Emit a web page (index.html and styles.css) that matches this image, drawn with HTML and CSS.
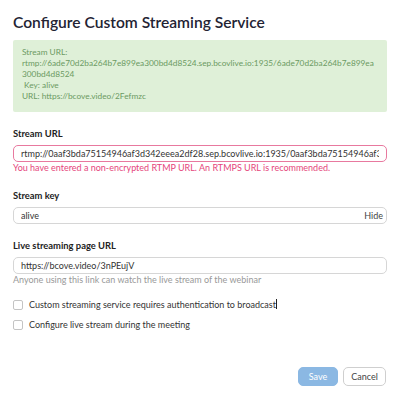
FILE: index.html
```html
<!DOCTYPE html>
<html lang="en">
<head>
    <meta charset="UTF-8">
    <meta name="viewport" content="width=device-width, initial-scale=1.0">
    <title>Configure Custom Streaming Service</title>
    <link rel="stylesheet" href="styles.css">
</head>
<body>
    <div class="dialog">
        <h1 class="title">Configure Custom Streaming Service</h1>

        <div class="notice">
            Stream URL:<br>
            rtmp://6ade70d2ba264b7e899ea300bd4d8524.sep.bcovlive.io:1935/6ade70d2ba264b7e899ea<br>
            300bd4d8524<br>
            &nbsp;Key: alive<br>
            URL: https://bcove.video/2Fefmzc
        </div>

        <div class="field">
            <label class="label">Stream URL</label>
            <input class="input input-error" type="text" value="rtmp://0aaf3bda75154946af3d342eeea2df28.sep.bcovlive.io:1935/0aaf3bda75154946af3d342eeea2df28">
            <div class="error">You have entered a non-encrypted RTMP URL. An RTMPS URL is recommended.</div>
        </div>

        <div class="field">
            <label class="label">Stream key</label>
            <div class="input input-group">
                <input class="bare" type="text" value="alive">
                <span class="hide">Hide</span>
            </div>
        </div>

        <div class="field">
            <label class="label">Live streaming page URL</label>
            <input class="input" type="text" value="https://bcove.video/3nPEujV">
            <div class="hint">Anyone using this link can watch the live stream of the webinar</div>
        </div>

        <div class="check first">
            <span class="box"></span>
            <span>Custom streaming service requires authentication to broadcast<span class="caret"></span></span>
        </div>
        <div class="check">
            <span class="box"></span>
            <span>Configure live stream during the meeting</span>
        </div>

        <div class="actions">
            <button class="btn btn-primary">Save</button>
            <button class="btn btn-cancel">Cancel</button>
        </div>
    </div>
</body>
</html>
```

FILE: styles.css
```css
* { margin: 0; padding: 0; box-sizing: border-box; }
body {
    font-family: Lato, 'Noto Sans', sans-serif;
    background: white;
    color: #232333;
}
.dialog {
    width: 400px;
    padding: 12px 13px 0 13px;
}
.title {
    font-size: 15.6px;
    line-height: 20px;
    font-weight: 600;
    color: #232333;
    margin-bottom: 8px;
}
.notice {
    background: #dff0d8;
    color: #6b9a62;
    font-size: 8.3px;
    line-height: 11px;
    padding: 7px 9px 10px 9px;
    border-radius: 2px;
    white-space: nowrap;
}
.field {
    margin-top: 16px;
}
.label {
    display: block;
    font-size: 9.4px;
    line-height: 12px;
    font-weight: bold;
    color: #222;
    margin-bottom: 5px;
}
.input {
    display: block;
    width: 100%;
    height: 17px;
    border: 1px solid #d6d6d6;
    border-radius: 5px;
    padding: 0 7px;
    font-family: inherit;
    font-size: 9px;
    color: #333;
    background: white;
    outline: none;
}
.input-error {
    border-color: #e8799f;
}
.input-group {
    display: flex;
    align-items: center;
    padding-right: 3px;
}
.bare {
    flex: 1;
    border: none;
    outline: none;
    font-family: inherit;
    font-size: 9px;
    color: #333;
    background: transparent;
}
.hide {
    font-size: 9px;
    color: #444;
}
.error {
    font-size: 9px;
    line-height: 12px;
    color: #e5467c;
}
.hint {
    font-size: 9px;
    line-height: 12px;
    color: #999;
}
.check {
    display: flex;
    align-items: center;
    gap: 6px;
    font-size: 9px;
    line-height: 14px;
    color: #333;
    margin-top: 6px;
}
.check.first {
    margin-top: 12px;
}
.box {
    width: 10px;
    height: 10px;
    border: 1px solid #c4c4c4;
    border-radius: 2px;
    background: white;
}
.caret {
    display: inline-block;
    width: 1px;
    height: 10px;
    background: #222;
    vertical-align: -1px;
}
.actions {
    display: flex;
    justify-content: flex-end;
    gap: 5px;
    margin-top: 35px;
    padding-right: 1px;
}
.btn {
    height: 19px;
    border: 1px solid #cfcfcf;
    border-radius: 5px;
    background: white;
    color: #444;
    font-family: inherit;
    font-size: 9px;
}
.btn-primary {
    background: #8bb8e3;
    border-color: #8bb8e3;
    color: white;
    width: 40px;
}
.btn-cancel {
    width: 43px;
}
```
